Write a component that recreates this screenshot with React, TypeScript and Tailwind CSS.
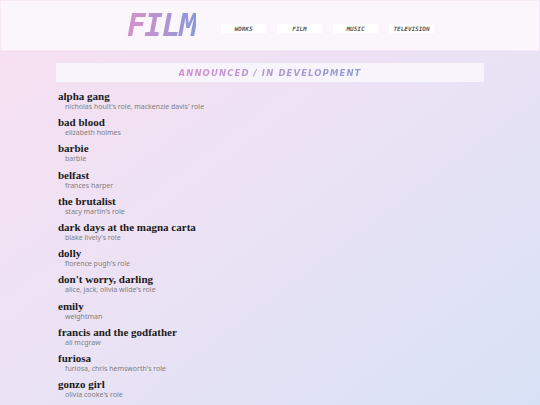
import React from "react";

const items: [string, string][] = [
  ["alpha gang", "nicholas hoult's role, mackenzie davis' role"],
  ["bad blood", "elizabeth holmes"],
  ["barbie", "barbie"],
  ["belfast", "frances harper"],
  ["the brutalist", "stacy martin's role"],
  ["dark days at the magna carta", "blake lively's role"],
  ["dolly", "florence pugh's role"],
  ["don't worry, darling", "alice, jack, olivia wilde's role"],
  ["emily", "weightman"],
  ["francis and the godfather", "ali mcgraw"],
  ["furiosa", "furiosa, chris hemsworth's role"],
  ["gonzo girl", "olivia cooke's role"],
];

const nav = ["WORKS", "FILM", "MUSIC", "TELEVISION"];

export default function App() {
  return (
    <div className="w-[540px] h-[405px] overflow-hidden bg-gradient-to-br from-[#f8e0f1] via-[#ebe2f5] to-[#d8e2f6]">
      <div className="h-[51px] bg-[#faf6fc] border border-[#f6e8f6] flex items-center">
        <div className="w-[126px] shrink-0" />
        <div className="w-[94px] shrink-0">
          <div
            className="text-[31px] font-bold italic tracking-[-1.3px] bg-gradient-to-r from-[#d890cc] to-[#8b98d8] bg-clip-text text-transparent leading-none inline-block"
            style={{ fontFamily: '"DejaVu Sans Mono", monospace' }}
          >
            FILM
          </div>
        </div>
        <div className="flex gap-[11px] mt-[6px]">
          {nav.map((n) => (
            <div
              key={n}
              className="w-[45px] h-[9px] bg-white flex items-center justify-center text-[6px] font-bold italic text-[#5a5a5a]"
              style={{ fontFamily: '"DejaVu Sans Mono", monospace' }}
            >
              {n}
            </div>
          ))}
        </div>
      </div>
      <div className="ml-[56px] w-[428px] h-[19px] mt-[12px] bg-[#f8f4fb] flex items-center justify-center">
        <span
          className="text-[8.5px] font-bold italic tracking-[1.1px] bg-gradient-to-r from-[#d48fcf] to-[#8a9ad8] bg-clip-text text-transparent mt-[2px]"
          style={{ fontFamily: '"DejaVu Sans", sans-serif' }}
        >
          ANNOUNCED / IN DEVELOPMENT
        </span>
      </div>
      <div className="ml-[58px] mt-[7px] flex flex-col">
        {items.map(([t, s]) => (
          <div key={t} className="h-[26.2px]">
            <div
              className="text-[11px] leading-[14px] font-bold text-[#1a1a1a]"
              style={{ fontFamily: '"Liberation Serif", serif' }}
            >
              {t}
            </div>
            <div
              className="ml-[7px] text-[7px] leading-[9px] text-[#808080] -mt-[1px]"
              style={{ fontFamily: '"Noto Sans", sans-serif' }}
            >
              {s}
            </div>
          </div>
        ))}
      </div>
    </div>
  );
}
